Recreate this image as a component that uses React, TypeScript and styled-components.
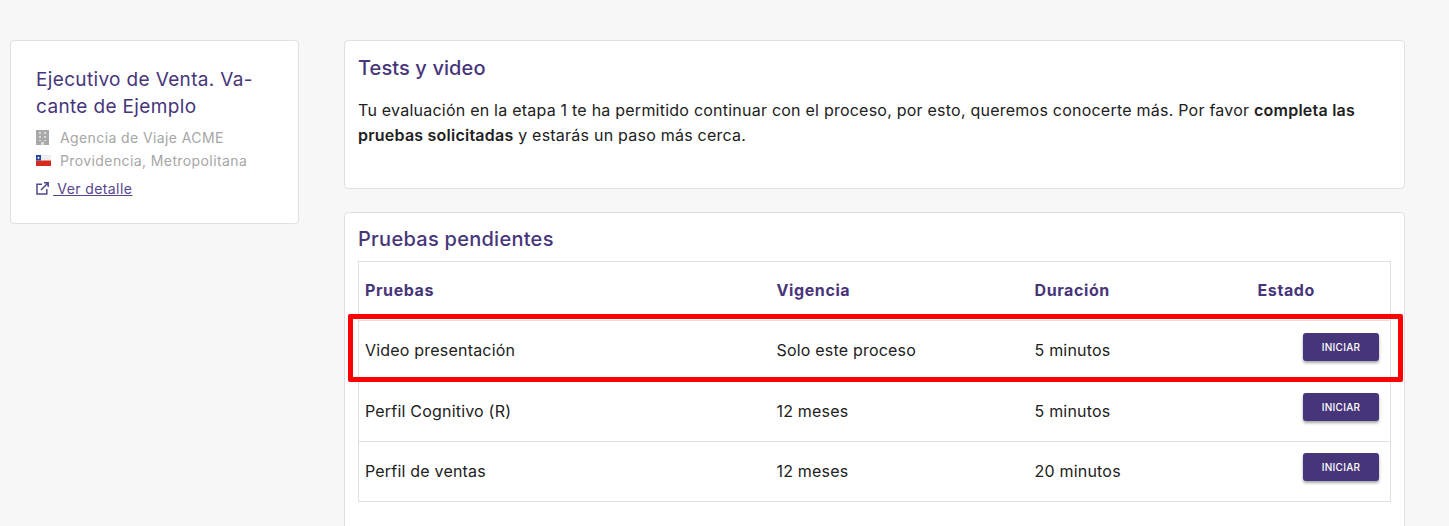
import styled, { createGlobalStyle } from "styled-components";

const purple = "#47357a";
const linkPurple = "#55458a";

const tests = [
  { name: "Video presentación", validity: "Solo este proceso", duration: "5 minutos" },
  { name: "Perfil Cognitivo (R)", validity: "12 meses", duration: "5 minutos" },
  { name: "Perfil de ventas", validity: "12 meses", duration: "20 minutos" },
];

function BuildingIcon() {
  return (
    <IconSvg width="13" height="15" viewBox="0 0 13 15">
      <path fill="#a9a9a9" d="M0 0h13v15H0z" />
      <path fill="#dcdcdc" d="M3 2h2v2H3zm5 0h2v2H8zM3 6h2v2H3zm5 0h2v2H8zM3 10h2v1H3zm5 0h2v1H8zM5 12h3v3H5z" />
    </IconSvg>
  );
}

function FlagIcon() {
  return (
    <IconSvg width="15" height="11" viewBox="0 0 15 11">
      <rect width="15" height="5.5" fill="#eeeeee" />
      <rect y="5.5" width="15" height="5.5" fill="#d52b1e" />
      <rect width="5" height="5.5" fill="#1f4a9c" />
      <circle cx="2.5" cy="2.7" r="1" fill="#ffffff" />
    </IconSvg>
  );
}

function ExternalIcon() {
  return (
    <IconSvg width="13" height="13" viewBox="0 0 13 13">
      <path fill="none" stroke={linkPurple} strokeWidth="1.5" d="M6 2.2H1v9.8h9.8V7M5 8l7-7M8 .8h4.2V5" />
    </IconSvg>
  );
}

export default function App() {
  return (
    <>
      <GlobalStyle />
      <Page>
        <Sidebar>
          <JobTitle>Ejecutivo de Venta. Va-<br />cante de Ejemplo</JobTitle>
          <MetaRow>
            <MetaIcon><BuildingIcon /></MetaIcon>
            Agencia de Viaje ACME
          </MetaRow>
          <MetaRow>
            <MetaIcon><FlagIcon /></MetaIcon>
            Providencia, Metropolitana
          </MetaRow>
          <DetailLink href="#">
            <ExternalIcon />
            <span>&nbsp;Ver detalle</span>
          </DetailLink>
        </Sidebar>
        <Main>
          <IntroCard>
            <CardTitle>Tests y video</CardTitle>
            <Intro>
              Tu evaluación en la etapa 1 te ha permitido continuar con el proceso, por esto, queremos conocerte más. Por favor <strong>completa las pruebas solicitadas</strong> y estarás un paso más cerca.
            </Intro>
          </IntroCard>
          <TestsCard>
            <TableTitle>Pruebas pendientes</TableTitle>
            <TableWrap>
              <Table>
                <thead>
                  <tr>
                    <HeadCell $width={412}>Pruebas</HeadCell>
                    <HeadCell $width={258}>Vigencia</HeadCell>
                    <HeadCell $width={223}>Duración</HeadCell>
                    <HeadCell>Estado</HeadCell>
                  </tr>
                </thead>
                <tbody>
                  {tests.map((test, index) => (
                    <Row key={test.name} $first={index === 0}>
                      <Cell>{test.name}</Cell>
                      <Cell>{test.validity}</Cell>
                      <Cell>{test.duration}</Cell>
                      <ActionCell>
                        <StartButton $first={index === 0}>INICIAR</StartButton>
                      </ActionCell>
                    </Row>
                  ))}
                </tbody>
              </Table>
              <Highlight />
            </TableWrap>
          </TestsCard>
        </Main>
      </Page>
    </>
  );
}

const GlobalStyle = createGlobalStyle`
  html, body {
    margin: 0;
    height: 526px;
    overflow: hidden;
    background: #f7f7f7;
  }
  body {
    font-family: "Inter", "Liberation Sans", sans-serif;
    color: #212121;
  }
  * {
    box-sizing: border-box;
  }
`;

const Page = styled.div`
  display: flex;
  align-items: flex-start;
  gap: 45px;
  height: 526px;
  padding: 40px 44px 0 10px;
  overflow: hidden;
`;

const Card = styled.section`
  background: #fff;
  border: 1px solid #e0e0e0;
  border-radius: 4px;
`;

const Sidebar = styled(Card)`
  flex: 0 0 289px;
  height: 184px;
  padding: 25px 25px 0;
`;

const JobTitle = styled.h2`
  margin: 0 0 6px;
  font-size: 19px;
  font-weight: 400;
  letter-spacing: 0.35px;
  line-height: 27px;
  color: ${purple};
`;

const MetaRow = styled.div`
  display: flex;
  align-items: center;
  height: 23px;
  font-size: 14px;
  letter-spacing: 0.4px;
  color: #a6a6a6;
`;

const MetaIcon = styled.span`
  display: flex;
  width: 24px;
  flex: none;
`;

const IconSvg = styled.svg`
  display: block;
  flex: none;
`;

const DetailLink = styled.a`
  display: flex;
  align-items: center;
  gap: 4px;
  margin-top: 8px;
  font-size: 14px;
  letter-spacing: 0.4px;
  color: ${linkPurple};

  span {
    text-decoration: underline;
  }
`;

const Main = styled.main`
  flex: 1;
  display: flex;
  flex-direction: column;
  gap: 23px;
`;

const IntroCard = styled(Card)`
  height: 149px;
  padding: 14px 13px 0;
`;

const TestsCard = styled(Card)`
  height: 340px;
  padding: 13px 13px 0;
`;

const CardTitle = styled.h3`
  margin: 0 0 17px;
  font-size: 20px;
  font-weight: 500;
  letter-spacing: 0.1px;
  line-height: 26px;
  color: ${purple};
`;

const TableTitle = styled(CardTitle)`
  margin-bottom: 9px;
  letter-spacing: 0.27px;
`;

const Intro = styled.p`
  margin: 0;
  font-size: 16px;
  letter-spacing: 0.23px;
  line-height: 25px;

  strong {
    font-weight: 600;
  }
`;

const TableWrap = styled.div`
  position: relative;
`;

const Table = styled.table`
  width: 100%;
  border-collapse: collapse;
  table-layout: fixed;
  border: 1px solid #e0e0e0;
`;

const HeadCell = styled.th<{ $width?: number }>`
  width: ${({ $width }) => ($width ? `${$width}px` : "auto")};
  height: 59px;
  padding: 0 6px 2px;
  text-align: left;
  font-size: 16px;
  font-weight: 700;
  letter-spacing: 0.6px;
  color: ${purple};
  border-bottom: 1px solid #e0e0e0;
`;

const Cell = styled.td`
  padding: 0 6px 2px;
  font-size: 16px;
  letter-spacing: 0.2px;
  border-bottom: 1px solid #e0e0e0;
`;

const Row = styled.tr<{ $first: boolean }>`
  height: ${({ $first }) => ($first ? "61px" : "60px")};
`;

const ActionCell = styled(Cell)`
  padding: 0 11px 0 6px;
`;

const StartButton = styled.button<{ $first: boolean }>`
  display: block;
  width: 76px;
  height: 28px;
  margin: 0 0 ${({ $first }) => ($first ? "8px" : "10px")} auto;
  padding: 0;
  border: 0;
  border-radius: 3px;
  background: ${purple};
  color: #fff;
  font-family: inherit;
  font-size: 10px;
  font-weight: 500;
  letter-spacing: 0.3px;
  box-shadow: 0 2px 3px rgba(0, 0, 0, 0.35);
`;

const Highlight = styled.div`
  position: absolute;
  left: -10px;
  top: 53px;
  width: 1055px;
  height: 68px;
  border: 5px solid #ff0000;
  border-radius: 2px;
  pointer-events: none;
`;
